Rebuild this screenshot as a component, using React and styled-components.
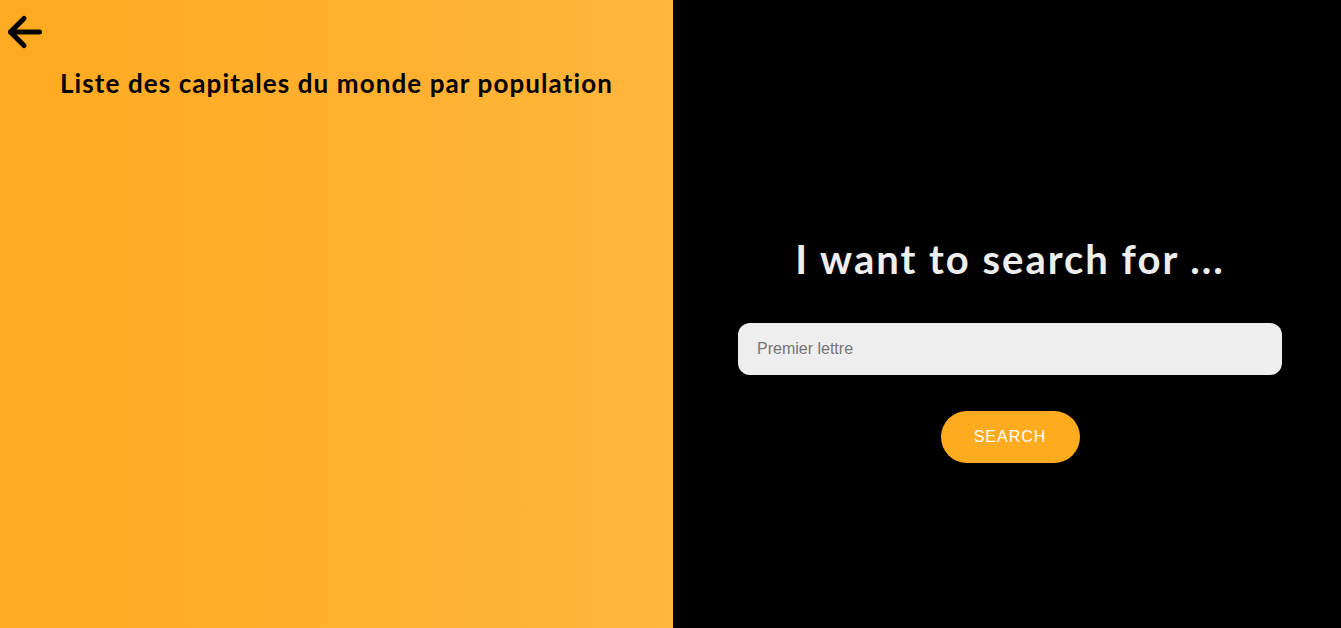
import React from 'react';
import styled, { createGlobalStyle } from 'styled-components';

const GlobalStyle = createGlobalStyle`
  html, body {
    margin: 0;
    padding: 0;
    height: 100%;
  }
  body {
    font-family: "Century Gothic", Lato, sans-serif;
  }
`;

const Page = styled.div`
  display: flex;
  height: 100vh;
  overflow: hidden;
`;

const LeftPanel = styled.section`
  width: 673px;
  flex-shrink: 0;
  background: linear-gradient(90deg, #ffaa20 0%, #ffb63c 100%);
  display: flex;
  flex-direction: column;
`;

const BackButton = styled.button`
  background: none;
  border: none;
  padding: 0;
  width: 48px;
  height: 52px;
  display: block;
  cursor: pointer;
  color: #000;
`;

const Title = styled.h2`
  margin: 15px 0 0;
  text-align: center;
  font-family: "Century Gothic", Lato, sans-serif;
  font-weight: 700;
  font-size: 26px;
  letter-spacing: 1.1px;
  color: #000;
`;

const RightPanel = styled.section`
  flex: 1;
  background: #000;
  display: flex;
  flex-direction: column;
  align-items: center;
  padding: 235px 0 0 6px;
  box-sizing: border-box;
`;

const Heading = styled.h1`
  margin: 0 0 40px;
  font-family: "Century Gothic", Lato, sans-serif;
  font-weight: 700;
  font-size: 40px;
  line-height: 48px;
  letter-spacing: 2px;
  color: #eeeeee;
`;

const Input = styled.input`
  width: 544px;
  height: 52px;
  box-sizing: border-box;
  border: none;
  border-radius: 12px;
  background: #eeeeee;
  padding: 0 19px;
  font-family: "Liberation Sans", Arial, sans-serif;
  font-size: 16px;
  outline: none;
  &::placeholder {
    color: #757575;
  }
`;

const SearchButton = styled.button`
  margin-top: 36px;
  width: 139px;
  height: 52px;
  border: none;
  border-radius: 26px;
  background: #ffab1f;
  color: #fff;
  font-family: "Liberation Sans", Arial, sans-serif;
  font-size: 16px;
  letter-spacing: 1px;
  text-transform: uppercase;
  cursor: pointer;
`;

const BackArrow = () => (
  <svg width="48" height="52" viewBox="0 0 48 52" fill="none" stroke="currentColor"
    strokeWidth="5" strokeLinecap="round" strokeLinejoin="round">
    <path d="M10.5 32 H39.5" />
    <path d="M24 18.5 L10.5 32 L24 45.5" />
  </svg>
);

export default function App() {
  return (
    <Page>
      <GlobalStyle />
      <LeftPanel>
        <BackButton aria-label="back">
          <BackArrow />
        </BackButton>
        <Title>Liste des capitales du monde par population</Title>
      </LeftPanel>
      <RightPanel>
        <Heading>I want to search for ...</Heading>
        <Input placeholder="Premier lettre" />
        <SearchButton>Search</SearchButton>
      </RightPanel>
    </Page>
  );
}
